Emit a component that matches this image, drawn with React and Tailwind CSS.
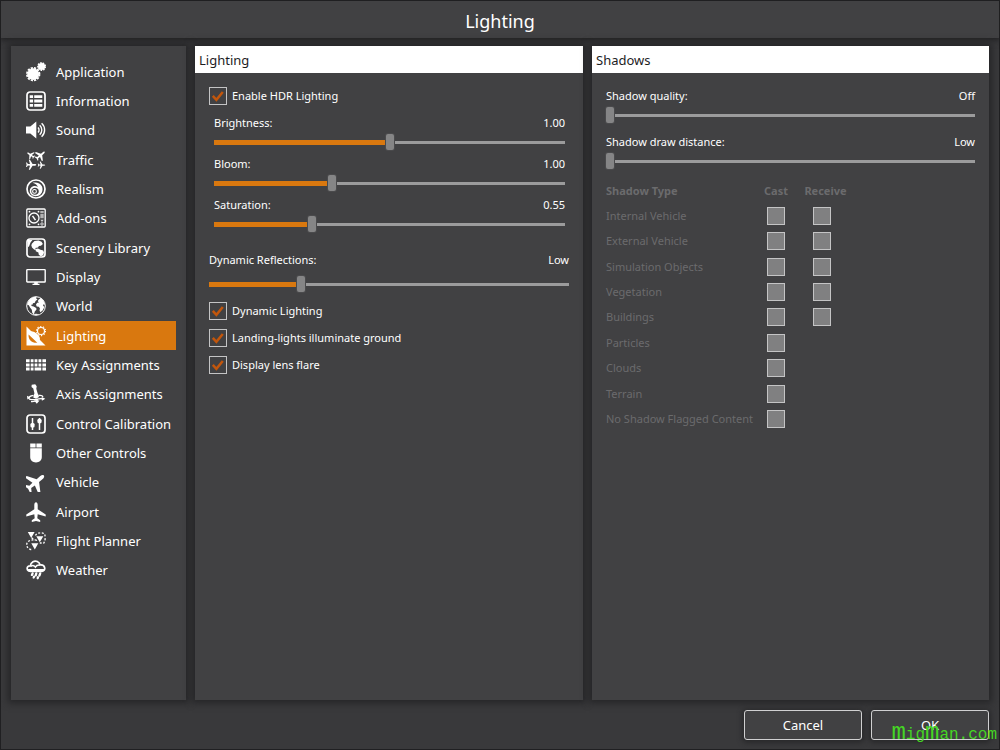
import React, { useState } from "react";

const PLANE =
  "M10 .2c1 0 1.700 1.200 1.700 2.800v4.300l8 5.100v2.200l-8-2.300-.4 4 2.900 2v1.600L10 18.900l-4.200 1v-1.600l2.900-2-.4-4-8 2.300v-2.200l8-5.100V3C8.300 1.400 9 .2 10 .2z";

function Svg({ children }) {
  return (
    <svg viewBox="0 0 20 20" className="h-5 w-5 shrink-0" fill="currentColor" aria-hidden="true">
      {children}
    </svg>
  );
}

const line = { fill: "none", stroke: "currentColor" };

const icons = {
  gears: (
    <Svg>
      <circle cx="7.200" cy="12.200" r="5.900" />
      <circle cx="7.200" cy="12.200" r="6.300" {...line} strokeWidth="1.800" strokeDasharray="2.200 1.100" />
      <circle cx="15.600" cy="4.500" r="3.600" />
      <circle cx="15.600" cy="4.500" r="3.700" {...line} strokeWidth="1.500" strokeDasharray="1.600 .98" />
    </Svg>
  ),
  list: (
    <Svg>
      <rect x="1" y="1" width="18" height="18" rx="3" {...line} strokeWidth="1.700" />
      <path d="M3.700 4.300h3.400v2.800H3.700zM8.200 4.300h8.100v2.800H8.200zM3.700 8.600h3.400v2.800H3.700zM8.200 8.600h8.100v2.800H8.200zM3.700 12.900h3.400v2.800H3.700zM8.200 12.900h8.100v2.800H8.200z" />
    </Svg>
  ),
  sound: (
    <Svg>
      <path d="M0 6.500h4.300L10.300 1.500v17l-6-5H0z" />
      <path d="M12 7.500a3.500 3.500 0 0 1 0 5M13.700 5.300a6.300 6.300 0 0 1 0 9.400M15.600 3.300a9 9 0 0 1 0 13.400" {...line} strokeWidth="1.400" />
    </Svg>
  ),
  traffic: (
    <Svg>
      <path d={PLANE} transform="translate(.5 .8) rotate(-55 4.200 4.200) scale(.42)" />
      <path d={PLANE} transform="translate(8.800 -.2) rotate(50 5.600 5.600) scale(.56)" />
      <path d={PLANE} transform="translate(0 9.600) rotate(90 5.200 5.200) scale(.52)" />
      <path d={PLANE} transform="translate(11.700 11.300) rotate(90 3.800 3.800) scale(.38)" />
    </Svg>
  ),
  realism: (
    <Svg>
      <circle cx="10" cy="10" r="9" {...line} strokeWidth="1.700" />
      <path
        fillRule="evenodd"
        d="M6.500 3.800C10 2.600 14.500 4 16 7.500c1.500 4-.3 8.500-4.500 9.500C7 17.800 4 15.500 3.800 12.200c0-3 2.200-5.200 5-5.200 1.200 0 2.200.4 3 1.100-.3-2-2.300-3.600-5.300-4.300zM8.900 8.700c-2.100 0-3.600 1.500-3.600 3.500s1.700 3.500 3.700 3.500c2.200 0 3.800-1.500 3.800-3.500S11.200 8.700 8.900 8.700z"
      />
      <circle cx="8.500" cy="12.400" r="1.900" {...line} strokeWidth="1.100" />
    </Svg>
  ),
  addons: (
    <Svg>
      <rect x=".8" y="1" width="18.400" height="18" rx="1" {...line} strokeWidth="1.300" />
      <circle cx="8" cy="10" r="5" {...line} strokeWidth="1.300" />
      <path d="M6.500 7.800l3 4.400" {...line} strokeWidth="1.500" />
      <circle cx="3.500" cy="3.700" r=".9" />
      <circle cx="3.500" cy="16.300" r=".9" />
      <circle cx="12.500" cy="3.700" r=".9" />
      <circle cx="12.500" cy="16.300" r=".9" />
      <path d="M14.300 3h3.400v2.200h-3.400zM14.300 6h3.400v4.200h-3.400z" opacity=".6" />
      <path d="M14.400 11.800h3.200L16 14z" opacity=".8" />
      <circle cx="16" cy="16" r="1.200" {...line} strokeWidth=".8" />
    </Svg>
  ),
  scenery: (
    <Svg>
      <rect x="1" y="1" width="18" height="18" rx="3" {...line} strokeWidth="1.700" />
      <path d="M2 2h4.500L4.500 4.500 3 8.500 2 9z" />
      <path d="M6 5.500L8.500 3l4-.6 3 1.300 1.400 2.300-2 1.700-2 .2-.9 1.500-2.800.6.900 1.400-1.700.4L6 9.500 5.300 7.200z" />
      <path d="M9.500 11l2.500-.5 2.500 1.200 2.800.8.700 2-.8 2.700-2.400 1-2-1.400-.4-2.300-2.600-1.300z" />
    </Svg>
  ),
  display: (
    <Svg>
      <rect x=".8" y="2.600" width="18.400" height="12.400" rx=".6" {...line} strokeWidth="1.400" />
      <path d="M8.200 15h3.600v1.700h1.700V18h-7v-1.300h1.700z" />
    </Svg>
  ),
  world: (
    <Svg>
      <circle cx="10" cy="10" r="9.300" {...line} strokeWidth="1" />
      <path d="M2 6C4 2 7.500.5 10.500.8l-.3 1.700 1.300 1L9.500 5l-.6 1.800-2 .5-.2 1.300-1.500.2.4 1.300 2 .3 2.600 1.500.3 1.700-1.700 1.800-.9 3-1.600-1.400-.5-3.200L4 11.500 2.800 9.300 1.200 8.700z" />
      <path d="M12.500 3.700L14.700 2l2.600 2.300 1.900 4.400-1.600-.5-.6 1.400 1.300 1.400-1.500 3.200-2.300 2.100-1-1.500.4-2.500-1.200-1.500-2-.4-.7-1.900 1.200-1.700 1.800-.3-1.200-1.300z" />
      <path d="M7 18.300l3-.6 3.500.5-3.500.9z" />
    </Svg>
  ),
  lighting: (
    <Svg>
      <path fillRule="evenodd" d="M.5.500L19.500 19.400H.5zM2.600 8.500c-.6 5 3 8.600 8.700 8.300z" />
      <path d="M4.300 5.200l9.400 9.400c.8-2.800-.4-4.700-2.200-6.300C9.300 6.300 7 5 4.300 5.200z" />
      <circle cx="15" cy="5" r="3.500" {...line} strokeWidth="1.200" />
      <circle cx="15" cy="5" r="4.600" {...line} strokeWidth="1.100" strokeDasharray="1.300 1.590" />
    </Svg>
  ),
  keys: (
    <Svg>
      <path d="M0 4.200h3.600v3H0zM4.700 4.200h2.800v3H4.700zM8.600 4.200h2.800v3H8.600zM12.500 4.200h2.800v3h-2.800zM16.400 4.200H20v3h-3.600zM0 8.400h3.600v3H0zM4.700 8.400h2.800v3H4.700zM8.600 8.400h2.800v3H8.600zM12.500 8.400h2.800v3h-2.800zM16.400 8.400H20v3h-3.600zM0 12.600h3.600v3H0zM4.700 12.600h2.800v3H4.700zM8.600 12.600h6.700v3H8.600zM16.400 12.600H20v3h-3.600z" />
    </Svg>
  ),
  joystick: (
    <Svg>
      <path d="M5.700.8L9.200.3l1.500 1.900-.4 2.500 1 3.600 1.700 4.800-3 1.700-2.800-1.300 1.200-4.200L7.300 4.600 5.500 3z" />
      <path d="M7.500 11.300c-2.800.4-4.800 1.600-4.600 3 .3 1.500 4 1.700 7.400 1 3.300-.8 5.700-1 7.200-.2M12.400 11.500c2.300-.4 4.300.4 4.600 1.700M5 17.600c2.800.3 5-.4 7-1.600" {...line} strokeWidth="1.300" />
      <path d="M1 11.800l3.400 1.700-3 1.900zM15.700 12.900l3.600 1.900-3.400 1.900zM8 16.300l5.500.2-2.700 3.300z" />
    </Svg>
  ),
  calibration: (
    <Svg>
      <rect x="1" y="1" width="18" height="18" rx="3" {...line} strokeWidth="1.700" />
      <path d="M6.500 4v12M13.500 4v12" {...line} strokeWidth="1.500" />
      <rect x="4.400" y="9" width="4.200" height="4.500" rx="1.500" />
      <rect x="11.400" y="4.700" width="4.200" height="4.500" rx="1.500" />
    </Svg>
  ),
  mouse: (
    <Svg>
      <path d="M4.200.6h5.400v3.800H4.200zM10.400.6h5.400v3.800h-5.400zM4.200 5.300h11.600v8.700c0 3.200-2.200 5.400-5.800 5.400s-5.800-2.200-5.800-5.400z" />
    </Svg>
  ),
  vehicle: (
    <Svg>
      <path d={PLANE} transform="translate(-.8 .8) rotate(50 10 10) translate(-1 -1.500) scale(1.100)" />
    </Svg>
  ),
  airport: (
    <Svg>
      <path d={PLANE} />
    </Svg>
  ),
  planner: (
    <Svg>
      <path d="M1.800 1h6.800L5.200 7zM10.300 5.200h7L13.800 11.200zM5.300 12.300h7L8.800 18.500z" />
      <path d="M9.500 4.500c1-3 7-3.500 9-1.500 1.200 2.500.8 7-.7 9h-4M11 9.500C7.500 8 2.500 9 1 12c-.8 3 .5 5.500 3.500 6.500h2M5.500 6.800L9 9" {...line} strokeWidth="1.300" strokeDasharray="2 1.600" />
    </Svg>
  ),
  weather: (
    <Svg>
      <path d="M5 11.200c-5 .5-5-5.700-.7-5.300C4.800 1.800 8.500.2 11.300 1.500c1.800.8 2.600 2 2.800 3.400 5.500-.6 6.200 6.300 1.500 6.300z" {...line} strokeWidth="1.700" />
      <path d="M4.800 6.300c1.700-1.200 3.700-.8 4.600.8 1-1.600 2.800-2.400 4.700-2" {...line} strokeWidth="1.500" />
      <path d="M1.500 9h17l-2.300 3.200H4z" />
      <path d="M6.600 13.400l-.7 1.500M10.300 13.400l-.6 2M14.200 13.400l-.8 2.200" {...line} strokeWidth="2.300" strokeLinecap="round" />
      <path d="M8 16.600l-.3.900M12 17.300l-.3.900" {...line} strokeWidth="2.300" strokeLinecap="round" />
    </Svg>
  ),
};

const navItems = [
  ["Application", "gears"],
  ["Information", "list"],
  ["Sound", "sound"],
  ["Traffic", "traffic"],
  ["Realism", "realism"],
  ["Add-ons", "addons"],
  ["Scenery Library", "scenery"],
  ["Display", "display"],
  ["World", "world"],
  ["Lighting", "lighting"],
  ["Key Assignments", "keys"],
  ["Axis Assignments", "joystick"],
  ["Control Calibration", "calibration"],
  ["Other Controls", "mouse"],
  ["Vehicle", "vehicle"],
  ["Airport", "airport"],
  ["Flight Planner", "planner"],
  ["Weather", "weather"],
];

const shadowTypes = [
  ["Internal Vehicle", true],
  ["External Vehicle", true],
  ["Simulation Objects", true],
  ["Vegetation", true],
  ["Buildings", true],
  ["Particles", false],
  ["Clouds", false],
  ["Terrain", false],
  ["No Shadow Flagged Content", false],
];

function SliderField({ id, label, initial, min = 0, max, step, format, gap = "gap-[3px]" }) {
  const [value, setValue] = useState(initial);
  const percent = ((value - min) / (max - min)) * 100;
  return (
    <div className={`flex flex-col ${gap}`}>
      <div className="flex h-4 items-center justify-between">
        <label htmlFor={id}>{label}</label>
        <output htmlFor={id}>{format(value)}</output>
      </div>
      <input
        id={id}
        type="range"
        min={min}
        max={max}
        step={step}
        value={value}
        onChange={(e) => setValue(Number(e.target.value))}
        style={{ backgroundSize: `${percent}% 5px, 100% 3px` }}
        className="block h-4 w-full appearance-none bg-[linear-gradient(#d9780f,#d9780f),linear-gradient(#9b9b9c,#9b9b9c)] bg-left bg-no-repeat [&::-webkit-slider-thumb]:h-4 [&::-webkit-slider-thumb]:w-2 [&::-webkit-slider-thumb]:appearance-none [&::-webkit-slider-thumb]:rounded-[2px] [&::-webkit-slider-thumb]:bg-[#858586] [&::-webkit-slider-thumb]:shadow-[0_0_0_1px_#4a4a4c]"
      />
    </div>
  );
}

function CheckField({ label }) {
  return (
    <label className="flex h-[18px] items-center gap-[5px] self-start">
      <span className="grid h-[18px] w-[18px]">
        <input
          type="checkbox"
          defaultChecked
          className="peer col-start-1 row-start-1 appearance-none border border-[#c4c4c5] bg-[#414143]"
        />
        <svg
          viewBox="0 0 18 18"
          className="pointer-events-none invisible col-start-1 row-start-1 h-[18px] w-[18px] peer-checked:visible"
          aria-hidden="true"
        >
          <path d="M3.800 8.800l3.600 4L13.800 5" fill="none" stroke="#c2560c" strokeWidth="2.500" />
        </svg>
      </span>
      {label}
    </label>
  );
}

function Panel({ title, className, children }) {
  return (
    <section className={`flex flex-col bg-[#414143] shadow-[0_0_7px_3px_#252527] ${className}`}>
      <h2 className="flex h-[27px] shrink-0 items-center bg-white px-1 pt-px text-[13px] text-[#1d1d1f]">{title}</h2>
      {children}
    </section>
  );
}

const disabledBox = "block h-[18px] w-[18px] mx-auto appearance-none border border-[#c4c4c5] bg-[#808081]";

export default function App() {
  const [active, setActive] = useState("Lighting");
  const levels = ["Low", "Low", "Medium", "High", "Ultra"];
  const quality = ["Off", "Low", "Medium", "High", "Ultra"];
  const distance = ["Low", "Medium", "High", "Ultra"];
  return (
    <div className="flex min-h-screen flex-col border border-[#202022] bg-[#39393b] font-['Noto_Sans','Open_Sans',sans-serif] text-[11px] leading-4 text-white">
      <header className="flex h-[37px] shrink-0 items-center justify-center bg-[#414143] shadow-[0_1px_6px_1px_#1f1f21]">
        <h1 className="pt-[3px] text-[18px] leading-6">Lighting</h1>
      </header>

      <main className="flex flex-1 gap-[9px] px-[10px] pt-2">
        <nav className="w-[175px] shrink-0 bg-[#414143] px-[10px] pt-[11px] shadow-[0_0_7px_3px_#252527]">
          <ul className="grid h-[528px] auto-rows-fr">
            {navItems.map(([label, icon]) => (
              <li key={label} className="flex">
                <button
                  type="button"
                  onClick={() => setActive(label)}
                  aria-current={active === label ? "page" : undefined}
                  className={`flex flex-1 items-center gap-[10px] whitespace-nowrap pl-[5px] text-left text-[13px] ${
                    active === label ? "bg-[#d9780f]" : ""
                  }`}
                >
                  {icons[icon]}
                  {label}
                </button>
              </li>
            ))}
          </ul>
        </nav>

        <Panel title="Lighting" className="flex-[388]">
          <div className="flex flex-col px-[14px] pt-[14px]">
            <CheckField label="Enable HDR Lighting" />
            <div className="mt-[10px] flex flex-col gap-[6px] pl-[5px] pr-[4px]">
              <SliderField id="brightness" label="Brightness:" initial={1} max={2} step={0.01} format={(v) => v.toFixed(2)} />
              <SliderField id="bloom" label="Bloom:" initial={1} max={3} step={0.01} format={(v) => v.toFixed(2)} />
              <SliderField id="saturation" label="Saturation:" initial={0.55} max={2} step={0.01} format={(v) => v.toFixed(2)} />
            </div>
            <div className="mt-5">
              <SliderField id="reflections" label="Dynamic Reflections:" initial={1} max={4} step={1} format={(v) => levels[v]} gap="gap-[8px]" />
            </div>
            <div className="mt-[10px] flex flex-col gap-[9px]">
              <CheckField label="Dynamic Lighting" />
              <CheckField label="Landing-lights illuminate ground" />
              <CheckField label="Display lens flare" />
            </div>
          </div>
        </Panel>

        <Panel title="Shadows" className="flex-[397]">
          <div className="flex flex-col px-[14px] pt-[15px]">
            <div className="flex flex-col gap-[11px]">
              <SliderField id="shadow-quality" label="Shadow quality:" initial={0} max={4} step={1} format={(v) => quality[v]} />
              <SliderField id="shadow-distance" label="Shadow draw distance:" initial={0} max={3} step={1} format={(v) => distance[v]} />
            </div>
            <table className="mt-[9px] h-[254px] w-[246px] table-fixed text-[#6b6b6d]">
              <colgroup>
                <col className="w-[147px]" />
                <col className="w-[46px]" />
                <col className="w-[53px]" />
              </colgroup>
              <thead>
                <tr className="h-[25px]">
                  <th className="text-left">Shadow Type</th>
                  <th className="text-center">Cast</th>
                  <th className="text-center">Receive</th>
                </tr>
              </thead>
              <tbody>
                {shadowTypes.map(([name, receive]) => (
                  <tr key={name}>
                    <th scope="row" className="whitespace-nowrap text-left font-normal">{name}</th>
                    <td>
                      <input type="checkbox" disabled aria-label={`${name}: cast`} className={disabledBox} />
                    </td>
                    <td className="pr-[7px]">
                      {receive && <input type="checkbox" disabled aria-label={`${name}: receive`} className={disabledBox} />}
                    </td>
                  </tr>
                ))}
              </tbody>
            </table>
          </div>
        </Panel>
      </main>

      <footer className="flex h-[49px] shrink-0 items-center justify-end gap-[9px] px-[10px]">
        <button type="button" className="h-[30px] w-[118px] rounded-[3px] border border-[#d0d0d1] bg-[#414143] text-[13px] shadow-[0_1px_5px_2px_#29292b]">
          Cancel
        </button>
        <div className="relative">
          <button type="button" className="block h-[30px] w-[118px] rounded-[3px] border border-[#d0d0d1] bg-[#414143] text-[13px] shadow-[0_1px_5px_2px_#29292b]">
            OK
          </button>
          <span className="pointer-events-none absolute -right-2 bottom-[-7px] whitespace-nowrap font-['Liberation_Mono',monospace] text-[16px] leading-6 text-[#45d624]">
            <span className="text-[24px]">m</span>ig<span className="text-[24px]">m</span>an.com
          </span>
        </div>
      </footer>
    </div>
  );
}
